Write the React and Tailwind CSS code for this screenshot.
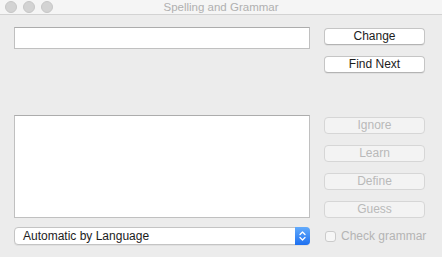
export default function App() {
  const Btn = ({ children, disabled }) => (
    <div
      className={
        "h-[17px] rounded-[4px] border text-center leading-[15px] text-[12px] " +
        (disabled
          ? "bg-[#f3f3f3] border-[#d6d6d6] text-[#b9b9b9]"
          : "bg-white border-[#c5c5c5] border-b-[#b3b3b3] text-[#1c1c1c] shadow-[0_1px_0_rgba(0,0,0,0.05)]")
      }
    >
      {children}
    </div>
  );
  const Light = () => (
    <span className="w-3 h-3 rounded-full bg-[#d3d3d3] border border-[#c7c7c7]" />
  );
  return (
    <div className="w-[442px] h-[257px] bg-[#ececec] font-['Liberation_Sans',Arial,sans-serif] overflow-hidden">
      <div className="h-[15px] border-b border-[#d3d3d3] bg-[#f5f5f5] grid grid-cols-[1fr_auto_1fr] items-center">
        <div className="flex gap-[6px] pl-[5px]">
          <Light />
          <Light />
          <Light />
        </div>
        <div className="text-[#b0b0b0] text-[11.5px] leading-none pt-[1px]">Spelling and Grammar</div>
        <div />
      </div>
      <div className="px-[14px] flex flex-col">
        <div className="flex gap-[14px] mt-[12px]">
          <div className="w-[296px] h-[22px] bg-white border border-[#c0c0c0] border-t-[#acacac]" />
          <div className="w-[101px] flex flex-col gap-[11px] pt-[1px]">
            <Btn>Change</Btn>
            <Btn>Find Next</Btn>
          </div>
        </div>
        <div className="flex gap-[14px] mt-[42px]">
          <div className="w-[296px] h-[103px] bg-white border border-[#c0c0c0] border-t-[#acacac]" />
          <div className="w-[101px] flex flex-col gap-[11px] pt-[2px]">
            <Btn disabled>Ignore</Btn>
            <Btn disabled>Learn</Btn>
            <Btn disabled>Define</Btn>
            <Btn disabled>Guess</Btn>
          </div>
        </div>
        <div className="flex gap-[14px] mt-[9px] items-center">
          <div className="w-[296px] h-[18px] bg-white border border-[#c4c4c4] rounded-[4px] flex items-stretch shadow-[0_1px_0_rgba(0,0,0,0.05)]">
            <div className="flex-1 pl-[8px] text-[12px] leading-[16px] text-[#1c1c1c]">Automatic by Language</div>
            <div className="w-[15px] -my-px -mr-px rounded-r-[4px] bg-gradient-to-b from-[#63abfb] to-[#1c6ff0] flex items-center justify-center">
              <svg width="9" height="12" viewBox="0 0 9 12" fill="none" stroke="white" strokeWidth="1.3" strokeLinecap="round" strokeLinejoin="round">
                <polyline points="2,4.5 4.5,2 7,4.5" />
                <polyline points="2,7.5 4.5,10 7,7.5" />
              </svg>
            </div>
          </div>
          <div className="flex items-center gap-[5px] pl-[1px]">
            <span className="w-[11px] h-[11px] rounded-[3px] border border-[#cbcbcb] bg-[#f6f6f6]" />
            <span className="text-[12px] text-[#b4b4b4] leading-none">Check grammar</span>
          </div>
        </div>
      </div>
    </div>
  );
}
